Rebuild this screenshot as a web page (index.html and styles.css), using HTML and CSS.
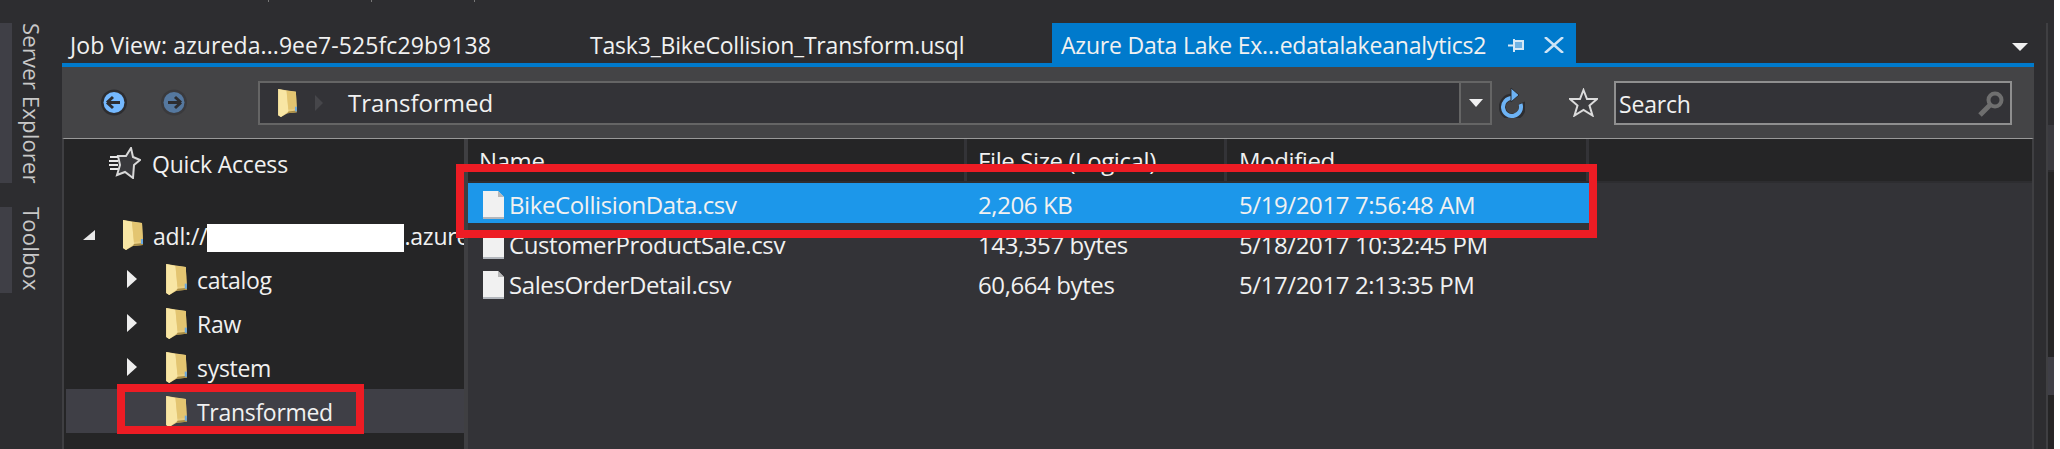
FILE: index.html
```html
<!DOCTYPE html>
<html lang="en">
<head>
    <meta charset="UTF-8">
    <title>Azure Data Lake Explorer</title>
    <link rel="stylesheet" href="styles.css">
</head>
<body>
    <svg class="sprites" width="0" height="0">
        <symbol id="folder" viewBox="0 0 20 30">
            <path d="M0 0 L19 3 L20 25 L10 26 L3 30 L0 28 Z" fill="#e8cd80"/>
            <path d="M0 0 L9 2 L11 24 L3 30 L0 28 Z" fill="#f8e6a4"/>
            <path d="M9 2 L19 3 L20 21 L11 22 Z" fill="#e3c571"/>
            <path d="M11 24 L20 23 L20 25 L10 26 Z" fill="#a98d45"/>
            <rect x="18" y="19" width="2" height="5" fill="#6aa8e0"/>
        </symbol>
        <symbol id="file" viewBox="0 0 21 28">
            <path d="M0 0 L15 0 L21 6 L21 28 L0 28 Z" fill="#f1f1f1"/>
            <path d="M15 0 L21 6 L15 6 Z" fill="#b9b9b9"/>
            <rect x="0" y="26" width="21" height="2" fill="#b2b6bc"/>
        </symbol>
        <symbol id="arrow-right" viewBox="0 0 10 18">
            <path d="M0 0 L10 9 L0 18 Z" fill="#eeeeee"/>
        </symbol>
    </svg>

    <div class="page">
        <div class="top-strip"><i></i><i></i><i></i></div>

        <div class="layout">
            <aside class="side-rail">
                <div class="side-tab side-tab-server"><b></b><span>Server Explorer</span></div>
                <div class="side-tab side-tab-toolbox"><b></b><span>Toolbox</span></div>
            </aside>

            <main class="doc-well">
                <div class="tab-row">
                    <div class="tab tab-job">Job View: azureda...9ee7-525fc29b9138</div>
                    <div class="tab tab-script">Task3_BikeCollision_Transform.usql</div>
                    <div class="tab tab-active">
                        <span>Azure Data Lake Ex...edatalakeanalytics2</span>
                        <svg class="tab-pin" width="16" height="13" viewBox="0 0 16 13">
                            <path d="M0 6.5 H6" stroke="#d6e8f6" stroke-width="2"/>
                            <path d="M6 0 V13" stroke="#d6e8f6" stroke-width="2"/>
                            <rect x="6" y="2" width="9" height="8" fill="#6fb2e4" stroke="#d6e8f6" stroke-width="2"/>
                        </svg>
                        <svg class="tab-close" width="20" height="16" viewBox="0 0 20 16">
                            <path d="M1 0 L19 16 M19 0 L1 16" stroke="#cfe4f5" stroke-width="2.5"/>
                        </svg>
                    </div>
                    <i class="tab-menu"></i>
                </div>

                <div class="toolbar">
                    <svg class="nav-btn" width="26" height="27" viewBox="0 0 26 27">
                        <circle cx="13" cy="13.5" r="13" fill="#2d2d30"/>
                        <circle cx="13" cy="13.5" r="10.5" fill="#75b9ff"/>
                        <path d="M6 13.5 H19 M6 13.5 L12 8 M6 13.5 L12 19" stroke="#2d2d30" stroke-width="3" fill="none"/>
                    </svg>
                    <svg class="nav-btn nav-forward" width="26" height="27" viewBox="0 0 26 27">
                        <circle cx="13" cy="13.5" r="13" fill="#3a3a3d"/>
                        <circle cx="13" cy="13.5" r="10.5" fill="#55789f"/>
                        <path d="M20 13.5 H7 M20 13.5 L14 8 M20 13.5 L14 19" stroke="#2d2d30" stroke-width="3" fill="none"/>
                    </svg>

                    <div class="address-box">
                        <svg class="address-folder" width="19" height="28"><use href="#folder"/></svg>
                        <svg class="address-sep" width="8" height="16" viewBox="0 0 8 16"><path d="M0 0 L8 8 L0 16 Z" fill="#46464a"/></svg>
                        <span class="address-text">Transformed</span>
                        <div class="address-drop"><i class="caret"></i></div>
                    </div>

                    <svg class="refresh" width="26" height="31" viewBox="0 0 26 31">
                        <path d="M13 10 A10 10 0 1 0 22.5 16" fill="none" stroke="#2d2d30" stroke-width="7"/>
                        <path d="M13 11 A9 9 0 1 0 21.5 17" fill="none" stroke="#6db3f5" stroke-width="4"/>
                        <path d="M12 1 L20 8 L12 15 Z" fill="#6db3f5" stroke="#2d2d30"/>
                    </svg>

                    <svg class="star" width="29" height="29" viewBox="0 0 29 29">
                        <path d="M14.5 2 L18 11 L28 11 L20.5 17.5 L23.5 27.5 L14.5 22 L5.5 27.5 L8.5 17.5 L1 11 L11 11 Z" fill="#3d3d40" stroke="#dcdcdc" stroke-width="2"/>
                    </svg>

                    <div class="search-box">
                        <span>Search</span>
                        <svg width="26" height="26" viewBox="0 0 26 26">
                            <circle cx="17" cy="9" r="6.5" fill="none" stroke="#6f6f6f" stroke-width="4"/>
                            <path d="M12 14 L2 24" stroke="#6f6f6f" stroke-width="5"/>
                        </svg>
                    </div>
                </div>

                <div class="panes">
                    <nav class="tree">
                        <div class="quick-access">
                            <svg width="32" height="32" viewBox="0 0 32 32">
                                <path d="M22 1 L24 10 L31 13 L25 18 L24 31 L16 25 L8 28 L11 18 L9 9 L17 9 Z" fill="#39393c" stroke="#d8d8d8" stroke-width="2"/>
                                <path d="M1 10 H9 M0 14 H9 M0 18 H9 M1 22 H9" stroke="#e8e8e8" stroke-width="2"/>
                            </svg>
                            <span>Quick Access</span>
                        </div>

                        <div class="tree-row tree-root">
                            <svg class="expander" width="12" height="10" viewBox="0 0 12 10"><path d="M12 0 V10 H0 Z" fill="#e8e8e8"/></svg>
                            <svg class="folder" width="20" height="30"><use href="#folder"/></svg>
                            <span class="root-label">adl://<i class="redact"></i>.azure</span>
                        </div>
                        <div class="tree-row tree-child">
                            <svg class="expander" width="10" height="18"><use href="#arrow-right"/></svg>
                            <svg class="folder" width="21" height="31"><use href="#folder"/></svg>
                            <span>catalog</span>
                        </div>
                        <div class="tree-row tree-child">
                            <svg class="expander" width="10" height="18"><use href="#arrow-right"/></svg>
                            <svg class="folder" width="21" height="31"><use href="#folder"/></svg>
                            <span>Raw</span>
                        </div>
                        <div class="tree-row tree-child">
                            <svg class="expander" width="10" height="18"><use href="#arrow-right"/></svg>
                            <svg class="folder" width="21" height="31"><use href="#folder"/></svg>
                            <span>system</span>
                        </div>
                        <div class="tree-row tree-child tree-selected">
                            <b class="expander-gap"></b>
                            <svg class="folder" width="21" height="31"><use href="#folder"/></svg>
                            <span>Transformed</span>
                        </div>
                    </nav>

                    <section class="files">
                        <div class="file-head">
                            <div class="col col-name">Name</div>
                            <div class="col col-size">File Size (Logical)</div>
                            <div class="col col-date">Modified</div>
                        </div>
                        <div class="file-row file-selected">
                            <div class="col col-name"><svg width="21" height="28"><use href="#file"/></svg>BikeCollisionData.csv</div>
                            <div class="col col-size">2,206 KB</div>
                            <div class="col col-date">5/19/2017 7:56:48 AM</div>
                        </div>
                        <div class="file-row">
                            <div class="col col-name"><svg width="21" height="28"><use href="#file"/></svg>CustomerProductSale.csv</div>
                            <div class="col col-size">143,357 bytes</div>
                            <div class="col col-date">5/18/2017 10:32:45 PM</div>
                        </div>
                        <div class="file-row">
                            <div class="col col-name"><svg width="21" height="28"><use href="#file"/></svg>SalesOrderDetail.csv</div>
                            <div class="col col-size">60,664 bytes</div>
                            <div class="col col-date">5/17/2017 2:13:35 PM</div>
                        </div>
                    </section>

                    <!-- red callouts drawn over the screenshot -->
                    <div class="mark mark-tree"></div>
                    <div class="mark mark-files"></div>
                </div>
            </main>

            <aside class="right-rail">
                <div class="rail-block rail-top"></div>
                <div class="rail-block rail-box"></div>
                <div class="rail-block rail-dark"></div>
                <div class="rail-block rail-thumb"></div>
                <div class="rail-block rail-end"></div>
            </aside>
        </div>
    </div>
</body>
</html>
```

FILE: styles.css
```css
body {
    margin: 0;
    background-color: #fff;
    color: #f1f1f1;
    font-family: "Open Sans", "Noto Sans", sans-serif;
    font-size: 23px;
    letter-spacing: -0.2px;
    overflow: hidden;
}

.sprites {
    position: absolute;
}

.page {
    width: 2054px;
    height: 449px;
    background-color: #2d2d30;
}

.top-strip {
    height: 23px;
    display: flex;
    padding-left: 268px;
}

.top-strip i {
    width: 1px;
    height: 2px;
    margin-right: 102px;
    background-color: #777;
}

.layout {
    display: flex;
    height: 426px;
}

/* left rail */
.side-rail {
    width: 62px;
    flex: none;
    display: flex;
    flex-direction: column;
    gap: 24px;
}

.side-tab {
    display: flex;
    color: #c8c8c8;
}

.side-tab b {
    width: 12px;
    background-color: #3f3f46;
}

.side-tab span {
    margin-left: 9px;
    writing-mode: vertical-rl;
    font-size: 22px;
    line-height: 22px;
    letter-spacing: 0.2px;
    white-space: nowrap;
}

.side-tab-server {
    height: 160px;
}

.side-tab-toolbox {
    height: 86px;
}

/* document area */
.doc-well {
    width: 1972px;
    flex: none;
    display: flex;
    flex-direction: column;
}

.tab-row {
    height: 40px;
    display: flex;
    flex: none;
    position: relative;
}

.tab {
    flex: none;
    box-sizing: border-box;
    padding-top: 4px;
    display: flex;
    align-items: center;
    white-space: nowrap;
}

.tab-job {
    width: 528px;
    padding-left: 8px;
    letter-spacing: 0.08px;
}

.tab-script {
    width: 462px;
}

.tab-active {
    width: 524px;
    background-color: #007acc;
    padding-left: 9px;
    padding-right: 12px;
}

.tab-pin {
    margin-left: auto;
}

.tab-close {
    margin-left: 20px;
}

.tab-menu {
    position: absolute;
    right: 6px;
    top: 20px;
    border-left: 8px solid transparent;
    border-right: 8px solid transparent;
    border-top: 8px solid #f1f1f1;
}

.toolbar {
    height: 71px;
    flex: none;
    border-top: 4px solid #007acc;
    background-color: #444446;
    display: flex;
    align-items: center;
    padding-left: 39px;
}

.nav-forward {
    margin-left: 34px;
}

.address-box {
    width: 1234px;
    height: 44px;
    margin-left: 71px;
    border: 2px solid #656565;
    box-sizing: border-box;
    background-color: #333337;
    display: flex;
    align-items: center;
    flex: none;
    font-size: 24px;
    letter-spacing: 0;
}

.address-folder {
    margin-left: 18px;
}

.address-sep {
    margin-left: 18px;
}

.address-text {
    margin-left: 25px;
}

.address-drop {
    margin-left: auto;
    align-self: stretch;
    width: 31px;
    box-sizing: border-box;
    background-color: #444446;
    border-left: 2px solid #656565;
    display: flex;
    align-items: center;
    justify-content: center;
}

.caret {
    border-left: 7px solid transparent;
    border-right: 7px solid transparent;
    border-top: 8px solid #f1f1f1;
}

.refresh {
    margin-left: 7px;
}

.star {
    margin-left: 44px;
}

.search-box {
    width: 398px;
    height: 44px;
    margin-left: 16px;
    border: 2px solid #8f8f8f;
    background-color: #333337;
    display: flex;
    align-items: center;
    justify-content: space-between;
    padding: 2px 6px 0 3px;
    box-sizing: border-box;
    flex: none;
}

/* lower panes */
.panes {
    flex: 1;
    min-height: 0;
    display: flex;
    border-top: 1px solid #999;
    border-left: 2px solid #3f3f42;
    border-right: 2px solid #3f3f42;
    position: relative;
}

.tree {
    width: 404px;
    flex: none;
    box-sizing: border-box;
    background-color: #252526;
    border-right: 4px solid #3f3f42;
    overflow: hidden;
}

.quick-access {
    height: 74px;
    display: flex;
    align-items: flex-start;
    padding: 8px 0 0 45px;
    box-sizing: border-box;
    gap: 11px;
    line-height: 34px;
}

.tree-row {
    height: 44px;
    display: flex;
    align-items: center;
    white-space: nowrap;
}

.tree-row svg {
    flex: none;
}

.tree-row span {
    padding-top: 2px;
}

.tree-root {
    padding-left: 19px;
}

.tree-root .folder {
    margin-left: 28px;
}

.root-label {
    margin-left: 10px;
}

.redact {
    display: inline-block;
    width: 197px;
    height: 28px;
    background-color: #fff;
    vertical-align: -7px;
}

.tree-child {
    padding-left: 63px;
}

.tree-child .folder {
    margin-left: 29px;
}

.tree-child span {
    margin-left: 10px;
    letter-spacing: -0.3px;
}

.expander-gap {
    width: 10px;
    flex: none;
}

.tree-selected {
    background-color: #3f3f46;
    margin-left: 2px;
    padding-left: 61px;
}

.files {
    flex: 1;
    background-color: #333337;
    font-size: 24px;
    letter-spacing: -0.4px;
}

.file-head {
    height: 44px;
    background-color: #252526;
    display: flex;
    border-bottom: 2px solid #2d2d30;
    box-sizing: border-box;
}

.file-head .col {
    border-right: 3px solid #333337;
    box-sizing: border-box;
}

.file-head .col-name {
    padding-left: 11px;
}

.col {
    flex: none;
    white-space: nowrap;
    display: flex;
    align-items: center;
    gap: 5px;
    box-sizing: border-box;
}

.col-name {
    width: 499px;
    padding-left: 15px;
}

.col-size {
    width: 260px;
    padding-left: 11px;
}

.col-date {
    width: 362px;
    padding-left: 12px;
}

.file-row {
    height: 40px;
    width: 1121px;
    display: flex;
    box-sizing: border-box;
    padding-top: 3px;
}

.file-selected {
    background-color: #1c97ea;
}

.mark {
    position: absolute;
    border: 8px solid #ed1c24;
    box-sizing: border-box;
}

.mark-tree {
    left: 53px;
    top: 245px;
    width: 247px;
    height: 50px;
}

.mark-files {
    left: 392px;
    top: 25px;
    width: 1141px;
    height: 74px;
}

/* right rail */
.right-rail {
    flex: none;
    width: 6px;
    margin-left: 12px;
    border-left: 2px solid #3f3f42;
    display: flex;
    flex-direction: column;
}

.rail-top {
    height: 102px;
    background-color: #2d2d30;
}

.rail-box {
    height: 45px;
    background-color: #3a3a3f;
    margin-bottom: 2px;
}

.rail-dark {
    height: 185px;
    background-color: #252526;
}

.rail-thumb {
    height: 38px;
    background-color: #3f3f46;
}

.rail-end {
    flex: 1;
    background-color: #252526;
}
```
